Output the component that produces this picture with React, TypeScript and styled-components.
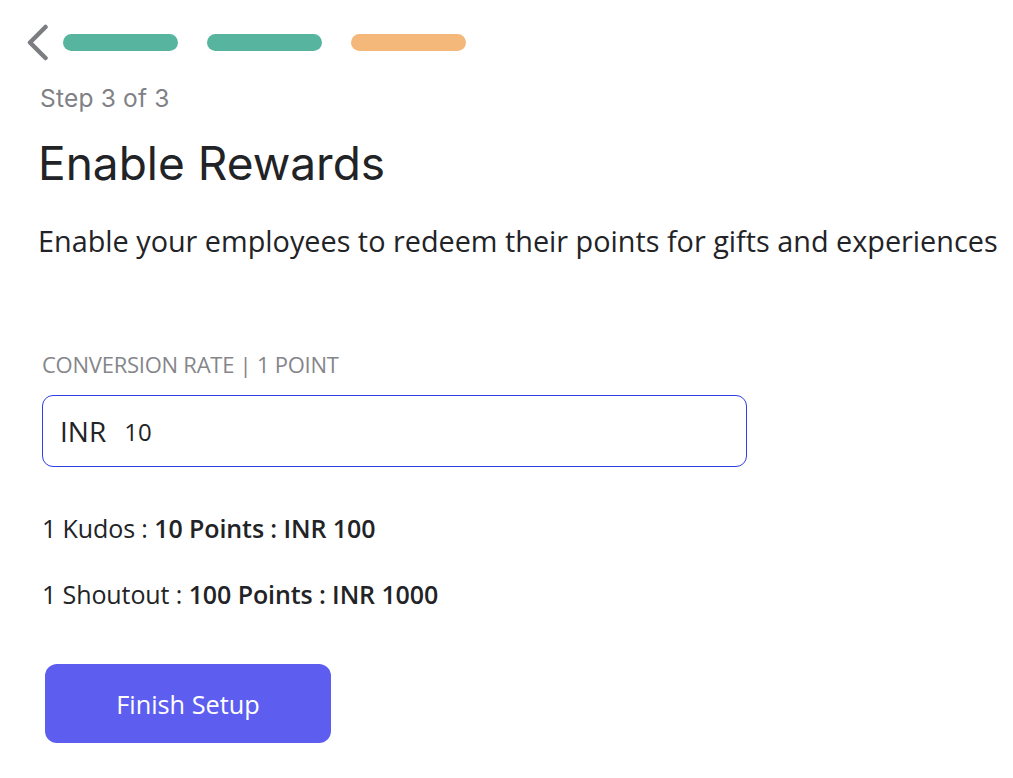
import React from "react";
import styled, { createGlobalStyle } from "styled-components";

const Global = createGlobalStyle`
  html, body { margin: 0; padding: 0; background: #ffffff; }
  body { font-family: "Open Sans", "Noto Sans", sans-serif; color: #222326; }
  * { box-sizing: border-box; }
`;

const Page = styled.div`
  display: flex;
  flex-direction: column;
  padding: 24px 0 0 0;
`;

const ProgressRow = styled.div`
  display: flex;
  align-items: center;
  height: 37px;
  padding-left: 25px;
`;

const BackButton = styled.button`
  border: none;
  background: none;
  padding: 0;
  margin: 0 13px 0 0;
  width: 25px;
  height: 37px;
  display: flex;
  align-items: center;
  justify-content: center;
  cursor: pointer;
`;

const Bars = styled.div`
  display: flex;
  gap: 29px;
`;

const Bar = styled.div<{ $color: string }>`
  width: 115px;
  height: 17px;
  border-radius: 9px;
  background: ${(p) => p.$color};
`;

const Content = styled.div`
  display: flex;
  flex-direction: column;
  padding-left: 38px;
`;

const StepText = styled.div`
  margin-top: 22px;
  margin-left: 2px;
  font-family: "Inter", "Open Sans", sans-serif;
  font-size: 24.5px;
  line-height: 30px;
  letter-spacing: 0.2px;
  color: #808186;
`;

const Title = styled.h1`
  margin: 22px 0 0 0;
  font-family: "Inter", "Open Sans", sans-serif;
  font-weight: 400;
  font-size: 46px;
  line-height: 56px;
  color: #222326;
`;

const Description = styled.p`
  margin: 30px 0 0 0;
  font-size: 28.8px;
  line-height: 40px;
  color: #222326;
`;

const FieldLabel = styled.div`
  margin: 88px 0 0 4px;
  font-size: 22px;
  line-height: 30px;
  letter-spacing: -0.25px;
  color: #85868a;
`;

const InputBox = styled.div`
  margin: 16px 0 0 4px;
  width: 705px;
  height: 72px;
  border: 1px solid #2f3fe3;
  border-radius: 11px;
  display: flex;
  align-items: center;
  padding-left: 17px;
  gap: 18px;
`;

const Currency = styled.span`
  font-size: 28px;
  line-height: 36px;
  color: #222326;
`;

const AmountInput = styled.input`
  border: none;
  outline: none;
  background: transparent;
  font-family: "Open Sans", sans-serif;
  font-size: 24px;
  line-height: 36px;
  margin-top: 2px;
  color: #222326;
  padding: 0;
  width: 200px;
`;

const Rates = styled.div`
  display: flex;
  flex-direction: column;
  gap: 32px;
  margin: 44px 0 0 4px;
`;

const RateLine = styled.div`
  font-size: 25px;
  line-height: 34px;
  letter-spacing: -0.1px;
  color: #222326;
`;

const Strong = styled.span`
  font-weight: 600;
`;

const FinishButton = styled.button`
  margin: 53px 0 0 7px;
  width: 286px;
  height: 79px;
  border: none;
  border-radius: 12px;
  background: #5d5eef;
  color: #ffffff;
  font-family: "Open Sans", sans-serif;
  font-size: 25.3px;
  cursor: pointer;
`;

export default function App() {
  return (
    <>
      <Global />
      <Page>
        <ProgressRow>
          <BackButton aria-label="Back">
            <svg width="25" height="37" viewBox="0 0 25 37">
              <path
                d="M20.5 3 L5 18.5 L20.5 34"
                fill="none"
                stroke="#7b7d81"
                strokeWidth="4.5"
                strokeLinecap="round"
                strokeLinejoin="round"
              />
            </svg>
          </BackButton>
          <Bars>
            <Bar $color="#57b59f" />
            <Bar $color="#57b59f" />
            <Bar $color="#f4b87b" />
          </Bars>
        </ProgressRow>
        <Content>
          <StepText>Step 3 of 3</StepText>
          <Title>Enable Rewards</Title>
          <Description>
            Enable your employees to redeem their points for gifts and experiences
          </Description>
          <FieldLabel>CONVERSION RATE | 1 POINT</FieldLabel>
          <InputBox>
            <Currency>INR</Currency>
            <AmountInput defaultValue="10" />
          </InputBox>
          <Rates>
            <RateLine>
              1 Kudos : <Strong>10 Points : INR 100</Strong>
            </RateLine>
            <RateLine>
              1 Shoutout : <Strong>100 Points : INR 1000</Strong>
            </RateLine>
          </Rates>
          <FinishButton>Finish Setup</FinishButton>
        </Content>
      </Page>
    </>
  );
}
